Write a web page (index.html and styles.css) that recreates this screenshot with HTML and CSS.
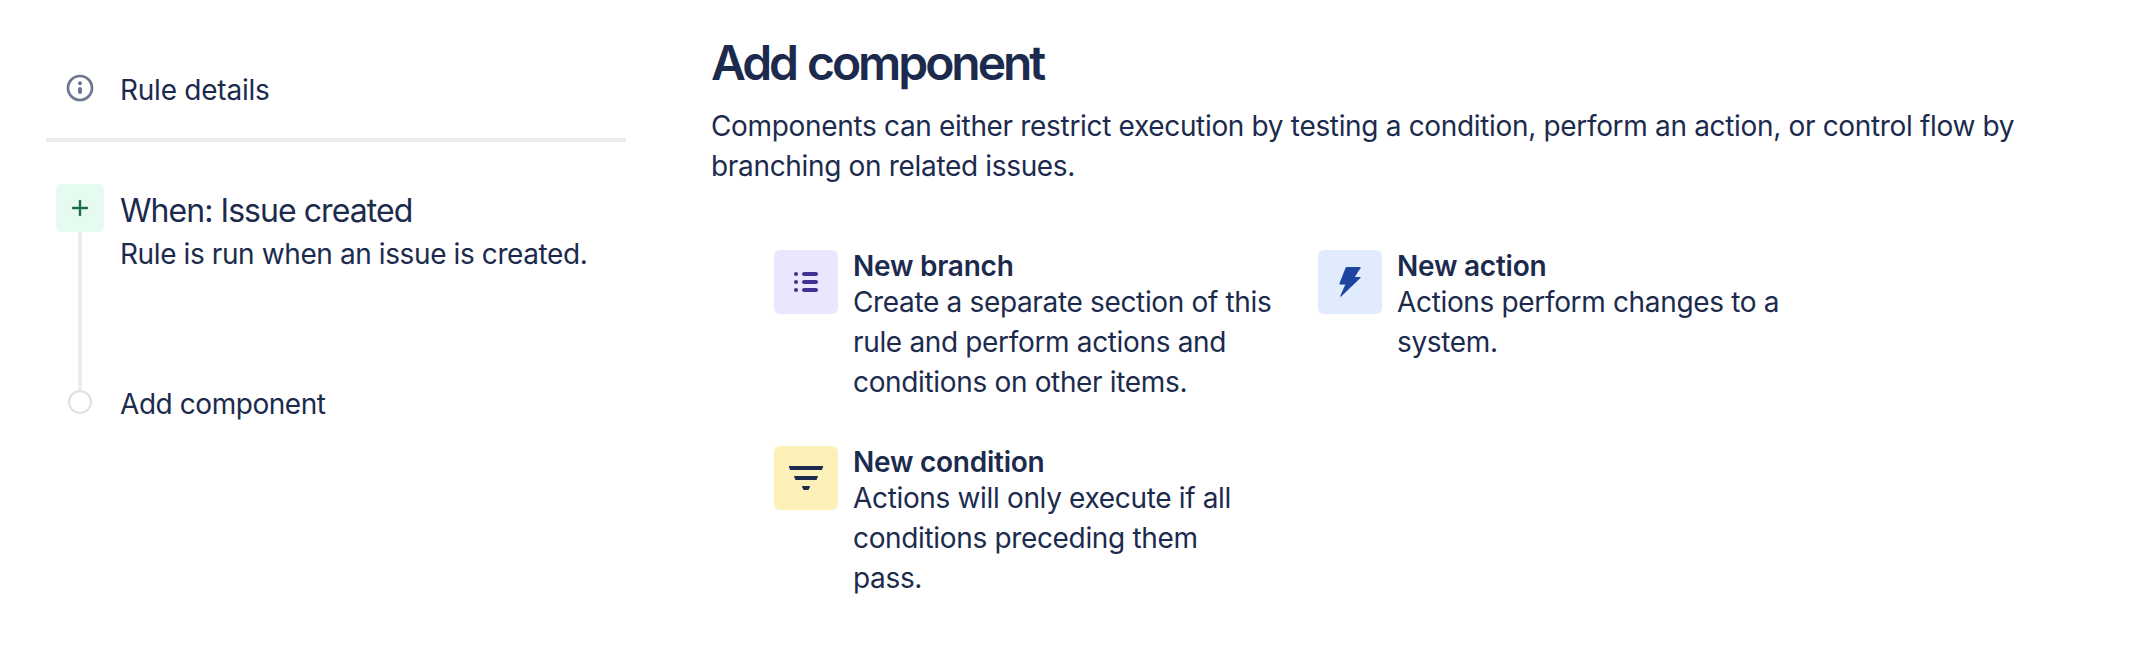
FILE: index.html
```html
<!DOCTYPE html>
<html lang="en">
<head>
<meta charset="utf-8">
<title>Add component</title>
<link rel="stylesheet" href="styles.css">
</head>
<body>
<main class="page">
  <aside class="rule">
    <div class="details">
      <svg class="info" viewBox="0 0 28 28"><circle cx="14" cy="14" r="12" fill="none" stroke="currentColor" stroke-width="2.7"/><circle cx="14" cy="9.3" r="2" fill="currentColor"/><rect x="12" y="13" width="4" height="7" rx="2" fill="currentColor"/></svg>
      <span class="label">Rule details</span>
    </div>
    <div class="step">
      <div class="rail">
        <div class="trigger"><svg viewBox="0 0 48 48"><path d="M24 17v14M17 24h14" stroke="currentColor" stroke-width="2.4" stroke-linecap="round"/></svg></div>
        <div class="line"></div>
      </div>
      <div class="step-text">
        <h2 class="when">When: Issue created</h2>
        <p class="summary">Rule is run when an issue is created.</p>
      </div>
    </div>
    <div class="add">
      <span class="dot"></span>
      <span class="label">Add component</span>
    </div>
  </aside>
  <section class="content">
    <h1 class="title">Add component</h1>
    <p class="intro">Components can either restrict execution by testing a condition, perform an action, or control flow by branching on related issues.</p>
    <div class="options">
      <article class="option">
        <div class="icon branch"><svg viewBox="0 0 64 64" fill="currentColor"><circle cx="22" cy="24" r="2"/><circle cx="22" cy="32" r="2"/><circle cx="22" cy="40" r="2"/><rect x="28" y="22" width="16" height="4" rx="2"/><rect x="28" y="30" width="16" height="4" rx="2"/><rect x="28" y="38" width="16" height="4" rx="2"/></svg></div>
        <div class="option-text"><h3>New branch</h3><p>Create a separate section of this rule and perform actions and conditions on other items.</p></div>
      </article>
      <article class="option">
        <div class="icon action"><svg viewBox="0 0 64 64" fill="currentColor"><path d="M28.500 17h13.500q1.200 0 .6 1L36.800 27h5.200q1.200 0 .4 1L23.400 46.300q-1.400 1.300-1-.5L27.300 34.500h-5.100q-1.200 0-.8-1L27.600 17.700q.3-.7.9-.7z"/></svg></div>
        <div class="option-text"><h3>New action</h3><p>Actions perform changes to a system.</p></div>
      </article>
      <article class="option">
        <div class="icon condition"><svg viewBox="0 0 64 64" fill="currentColor"><path d="M15.500 20h33q.8 0 .6.800l-1 2.600q-.2.600-.8.600H16.700q-.6 0-.8-.6l-1-2.600q-.2-.8.600-.8zM20.700 30h22.600q.8 0 .6.800l-1.200 2.600q-.2.600-.8.600H22.100q-.6 0-.8-.6l-1.200-2.600q-.2-.8.600-.8zM28.500 40h7q.8 0 .5.800l-1.300 2.600q-.3.600-.9.600h-3.600q-.6 0-.9-.6L28 40.800q-.3-.8.500-.8z"/></svg></div>
        <div class="option-text"><h3>New condition</h3><p>Actions will only execute if all conditions preceding them pass.</p></div>
      </article>
    </div>
  </section>
</main>
</body>
</html>
```
FILE: styles.css
```css
* { box-sizing: border-box; }
body {
  margin: 0;
  background: #fff;
  color: #1c2b4d;
  font-family: Inter, "Liberation Sans", sans-serif;
  font-size: 28px;
  line-height: 40px;
  letter-spacing: -0.34px;
}
h1, h2, h3, p { margin: 0; }
svg { display: block; width: 100%; height: 100%; }
.page {
  display: grid;
  grid-template-columns: 580px 1fr;
  column-gap: 85px;
  padding: 35px 46px 0;
  height: 652px;
}
.details {
  display: flex;
  gap: 26px;
  height: 107px;
  padding: 35px 0 0 20px;
  border-bottom: 4px solid #ebebf0;
  letter-spacing: -0.24px;
}
.details .info { width: 28px; height: 28px; margin-top: 4px; color: #6b778c; }
.step { display: flex; gap: 16px; padding: 42px 0 0 10px; }
.rail { display: flex; flex-direction: column; align-items: center; width: 48px; height: 206px; }
.trigger { width: 48px; height: 48px; border-radius: 6px; background: #e6fbf0; color: #216e4e; }
.line { width: 4px; flex: 1; background: #ebecf0; }
.step-text { padding-top: 7px; }
.when { font-size: 32px; font-weight: 400; line-height: 40px; letter-spacing: -0.95px; }
.summary { margin-top: 3px; letter-spacing: -0.4px; }
.add { display: flex; gap: 28px; padding-left: 22px; line-height: 28px; letter-spacing: -0.44px; }
.dot { width: 24px; height: 24px; border: 2px solid #dfe1e6; border-radius: 50%; }
.title { font-size: 48px; font-weight: 600; line-height: 56px; letter-spacing: -3.05px; word-spacing: 2px; }
.intro { width: 1330px; margin-top: 15px; letter-spacing: -0.33px; }
.options { display: grid; grid-template-columns: 500px 500px; column-gap: 44px; row-gap: 44px; padding: 64px 0 0 63px; }
.option { display: flex; gap: 15px; }
.icon { flex: none; width: 64px; height: 64px; border-radius: 6px; }
.branch { background: #eae6fe; color: #403294; }
.action { background: #e0ebfe; color: #1d459f; }
.condition { background: #fcf0b9; color: #1c2b4d; }
.option h3 { font-size: 28px; font-weight: 600; line-height: 32px; letter-spacing: -0.24px; }
```
